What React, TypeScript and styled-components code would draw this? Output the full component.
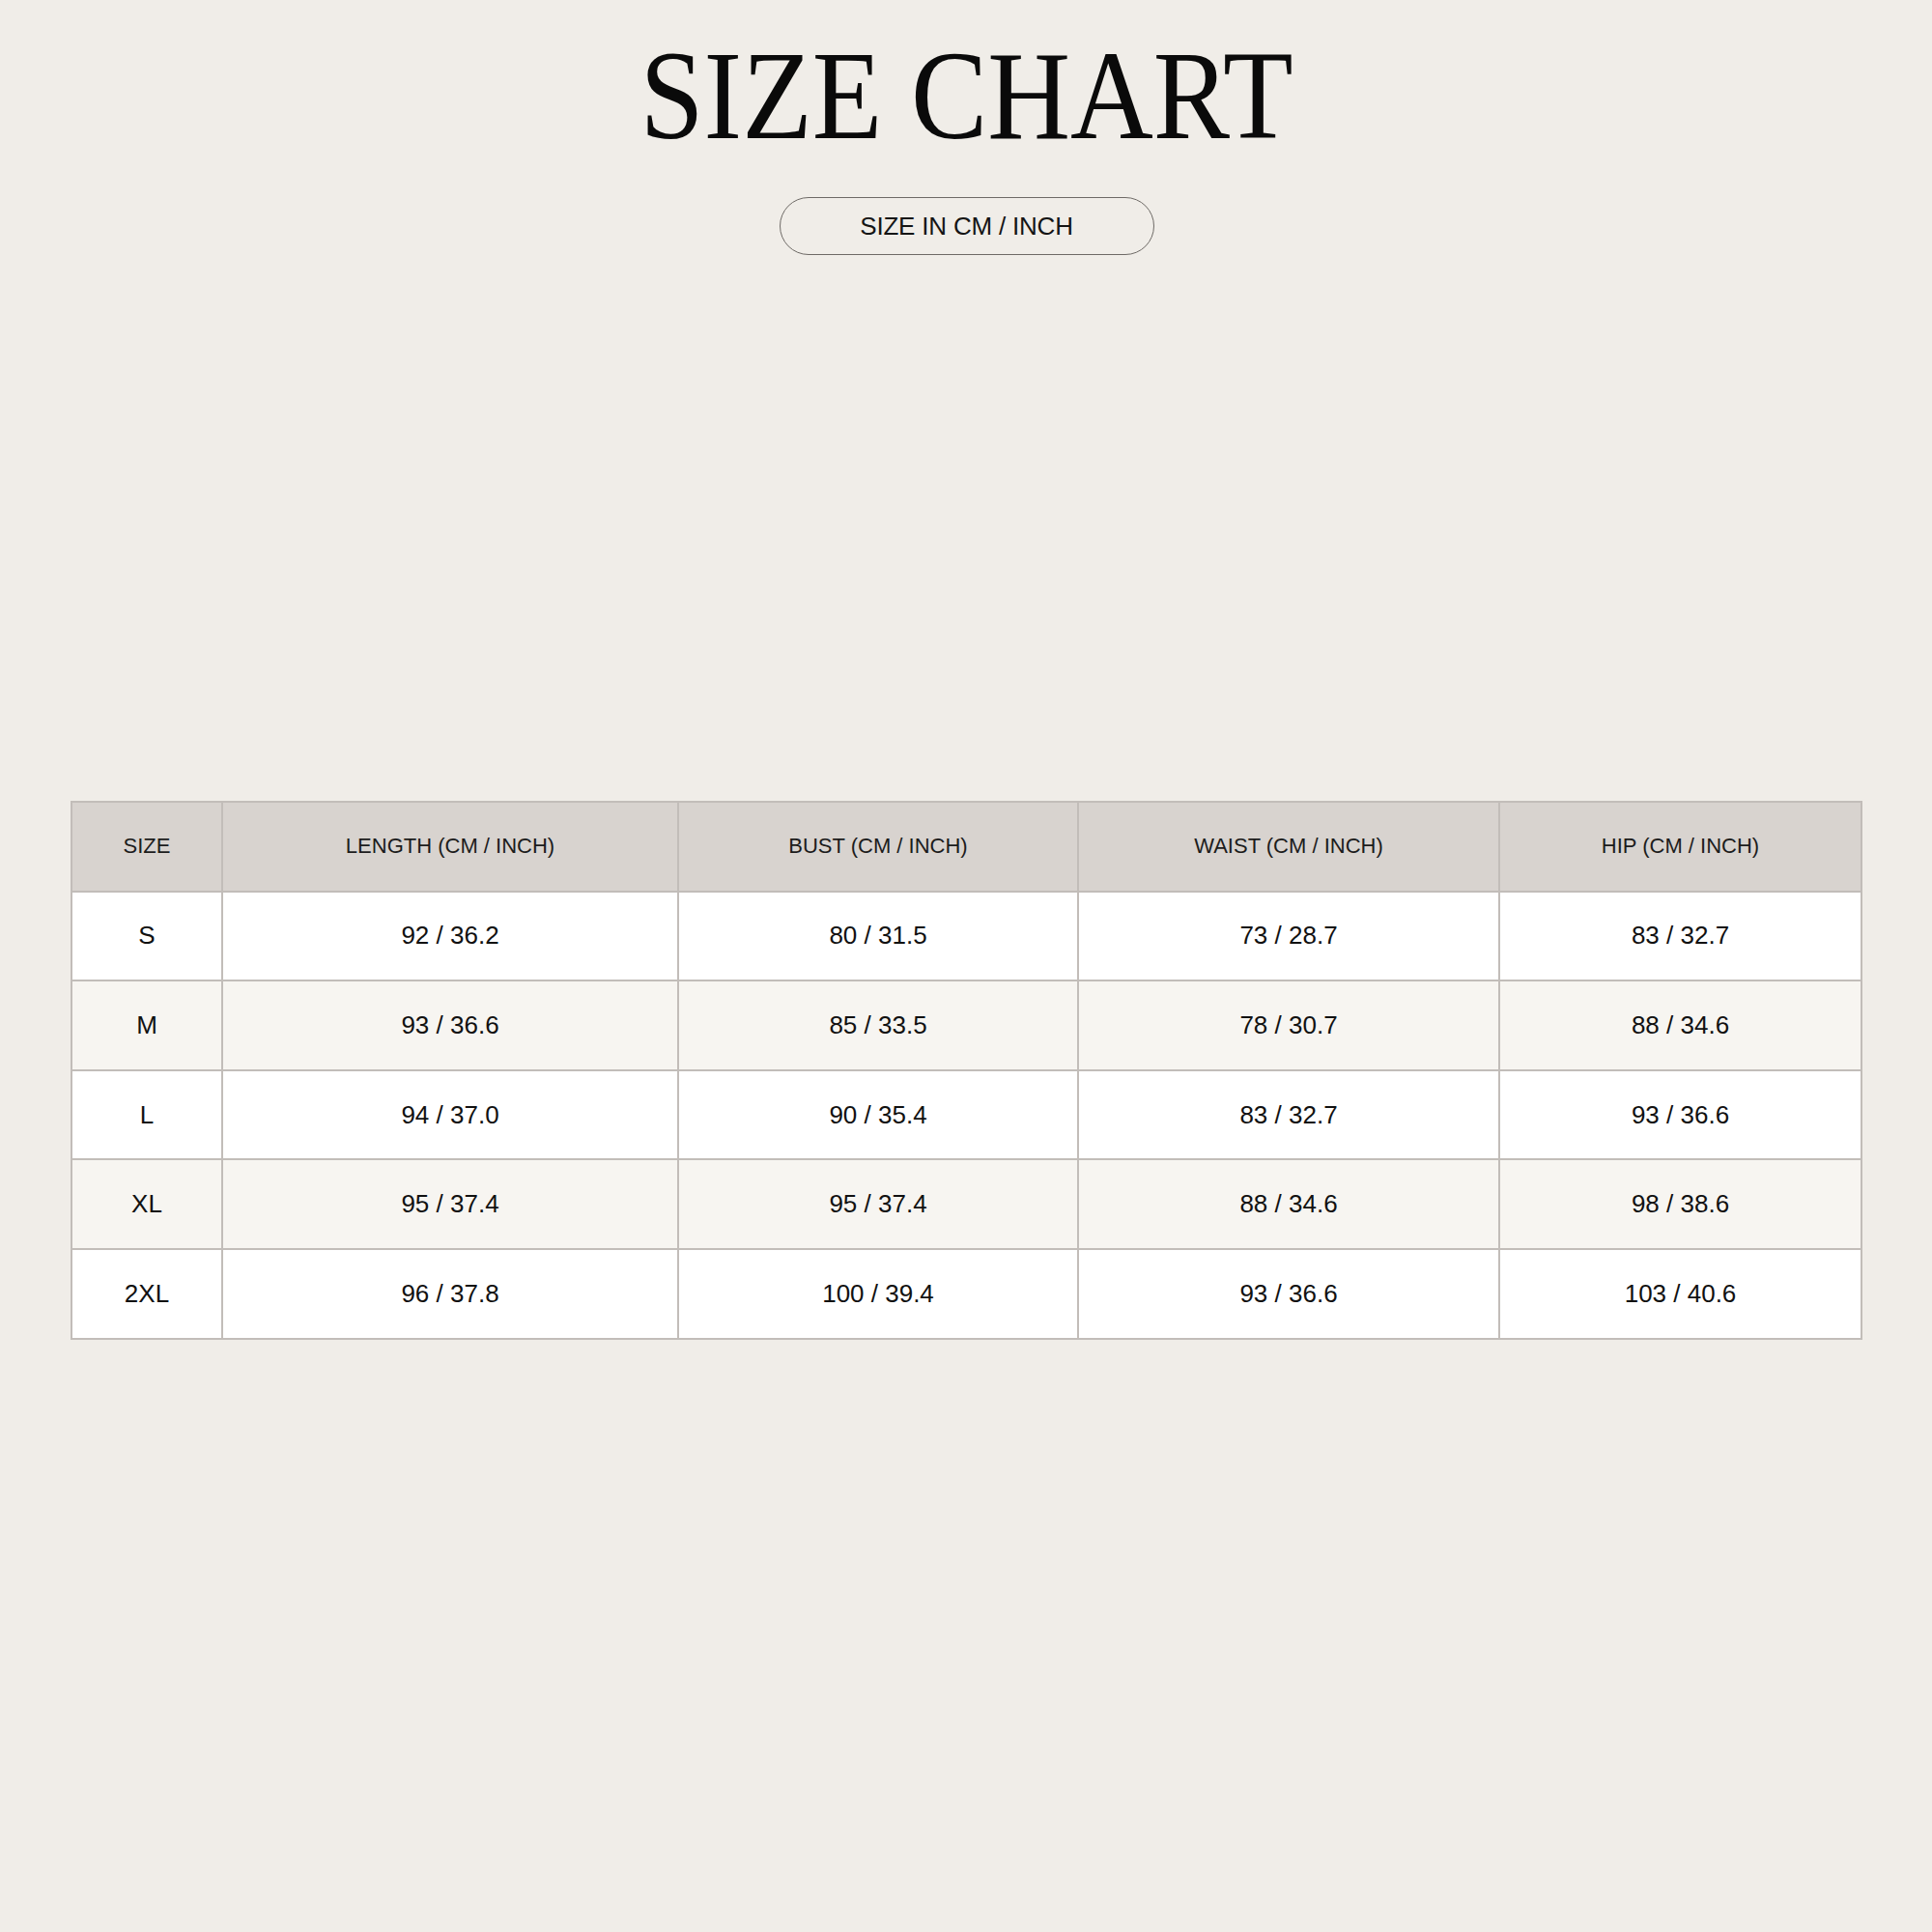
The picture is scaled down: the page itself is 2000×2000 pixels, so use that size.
import styled, { createGlobalStyle } from 'styled-components';

const GlobalStyle = createGlobalStyle`
  html, body {
    margin: 0;
    padding: 0;
    background: #f0ede8;
  }
  body {
    font-family: "Liberation Sans", Arial, sans-serif;
    color: #111;
  }
`;

export const Page = styled.div`
  width: 2000px;
  min-height: 2000px;
  box-sizing: border-box;
  padding: 33px 73px 0 74px;
  display: flex;
  flex-direction: column;
  align-items: center;
`;

export const Title = styled.h1`
  margin: 0;
  height: 132px;
  font-family: "Liberation Serif", "Times New Roman", serif;
  font-weight: 400;
  font-size: 132px;
  line-height: 1;
  color: #0a0a0a;
  white-space: nowrap;
`;

export const TitleText = styled.span`
  display: inline-block;
  transform: scaleX(0.9);
  transform-origin: center;
`;

export const UnitPill = styled.div`
  margin-top: 39px;
  width: 388px;
  height: 60px;
  box-sizing: border-box;
  border: 1px solid #6e6a66;
  border-radius: 30px;
  display: flex;
  align-items: center;
  justify-content: center;
  font-size: 26px;
  color: #151515;
  letter-spacing: -0.2px;
`;

export const ChartTable = styled.table`
  margin-top: 565px;
  width: 1853px;
  table-layout: fixed;
  border-collapse: collapse;
  border: 2px solid #b9b5b1;
  background: #ffffff;
`;

export const HeadCell = styled.th`
  height: 90.6px;
  padding: 0;
  background: #d8d3cf;
  border: 2px solid #c2bdb9;
  font-weight: 400;
  font-size: 22px;
  color: #1c1c1c;
  text-align: center;
  vertical-align: middle;
`;

export const Row = styled.tr<{ $striped?: boolean }>`
  background: ${(props) => (props.$striped ? '#f7f5f1' : '#ffffff')};
`;

export const Cell = styled.td`
  height: 90.6px;
  padding: 0;
  border: 2px solid #c2bdb9;
  font-size: 26px;
  color: #111;
  text-align: center;
  vertical-align: middle;
`;

const columns = [
  { label: 'SIZE', width: 156 },
  { label: 'LENGTH (CM / INCH)', width: 472 },
  { label: 'BUST (CM / INCH)', width: 414 },
  { label: 'WAIST (CM / INCH)', width: 436 },
  { label: 'HIP (CM / INCH)', width: 375 },
];

const rows = [
  ['S', '92 / 36.2', '80 / 31.5', '73 / 28.7', '83 / 32.7'],
  ['M', '93 / 36.6', '85 / 33.5', '78 / 30.7', '88 / 34.6'],
  ['L', '94 / 37.0', '90 / 35.4', '83 / 32.7', '93 / 36.6'],
  ['XL', '95 / 37.4', '95 / 37.4', '88 / 34.6', '98 / 38.6'],
  ['2XL', '96 / 37.8', '100 / 39.4', '93 / 36.6', '103 / 40.6'],
];

function App() {
  return (
    <>
      <GlobalStyle />
      <Page>
        <Title>
          <TitleText>SIZE CHART</TitleText>
        </Title>
        <UnitPill>SIZE IN CM / INCH</UnitPill>

        <ChartTable>
          <colgroup>
            {columns.map((col) => (
              <col key={col.label} style={{ width: col.width }} />
            ))}
          </colgroup>
          <thead>
            <tr>
              {columns.map((col) => (
                <HeadCell key={col.label}>{col.label}</HeadCell>
              ))}
            </tr>
          </thead>
          <tbody>
            {rows.map((row, i) => (
              <Row key={row[0]} $striped={i % 2 === 1}>
                {row.map((value, j) => (
                  <Cell key={`${row[0]}-${j}`}>{value}</Cell>
                ))}
              </Row>
            ))}
          </tbody>
        </ChartTable>
      </Page>
    </>
  );
}

export default App;
